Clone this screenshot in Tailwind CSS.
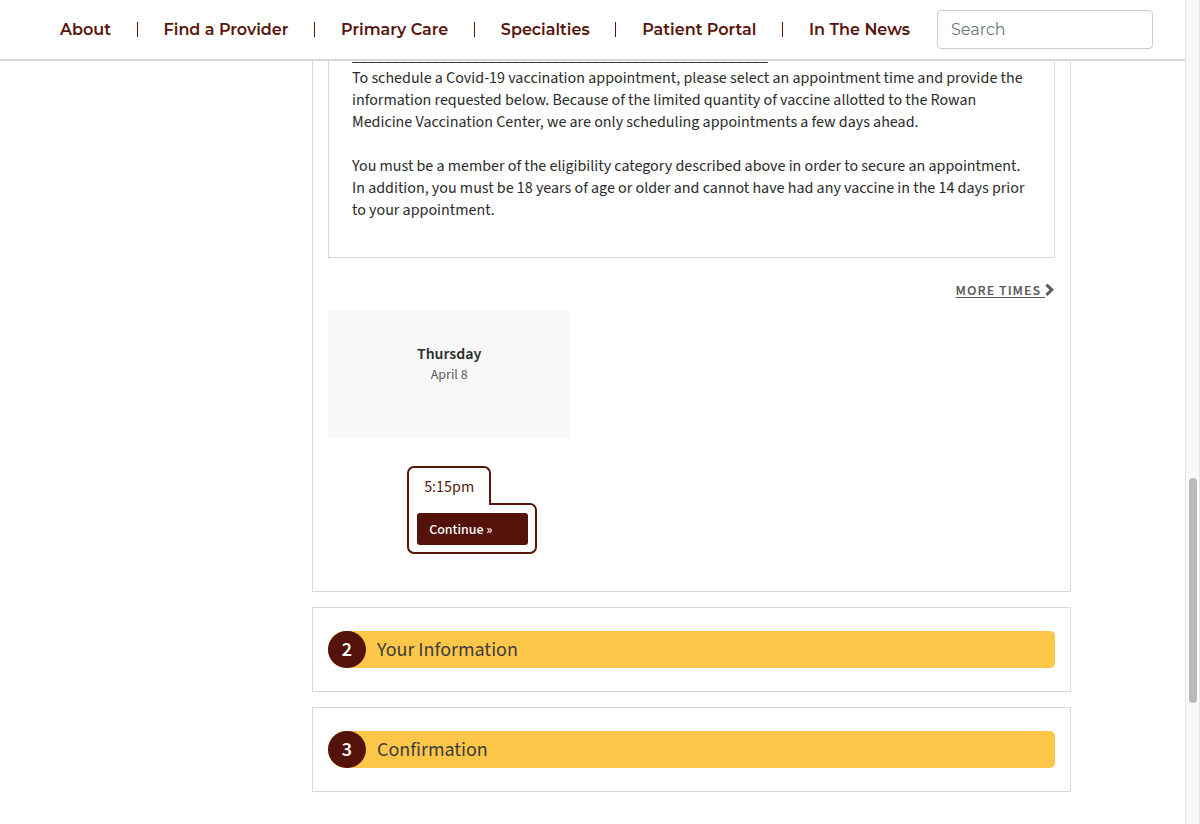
<!DOCTYPE html>
<html lang="en">
<head>
<meta charset="utf-8">
<meta name="viewport" content="width=device-width, initial-scale=1">
<title>Schedule a Vaccination Appointment</title>
<script src="https://cdn.jsdelivr.net/npm/@tailwindcss/browser@4"></script>
</head>
<body class="bg-white font-['Source_Sans_Pro','Source_Sans_3','Noto_Sans_CJK_SC',sans-serif] text-[#2b2b2b]">
<div class="flex h-screen overflow-hidden">
  <div class="min-w-0 grow">
    <header class="relative z-10 flex items-center border-b-2 border-[#d8d8d8] bg-white pt-[10px] pr-8 pb-[10px] pl-[60px] font-['Montserrat','Inter',sans-serif]">
      <nav aria-label="Main" class="flex grow items-center justify-between text-[16px] leading-6 font-semibold whitespace-nowrap text-[#57150b]">
        <a href="#">About</a>
        <span class="h-[15px] w-px bg-[#57150b]"></span>
        <a href="#">Find a Provider</a>
        <span class="h-[15px] w-px bg-[#57150b]"></span>
        <a href="#">Primary Care</a>
        <span class="h-[15px] w-px bg-[#57150b]"></span>
        <a href="#">Specialties</a>
        <span class="h-[15px] w-px bg-[#57150b]"></span>
        <a href="#">Patient Portal</a>
        <span class="h-[15px] w-px bg-[#57150b]"></span>
        <a href="#">In The News</a>
      </nav>
      <input type="search" aria-label="Search" placeholder="Search" class="ml-[27px] h-[39px] w-[216px] rounded-[4px] border border-[#c5cdd5] bg-white px-[13px] text-[16px] text-[#495057] placeholder:text-[#6c757d]">
    </header>

    <main class="-mt-4 mr-[114px] ml-[312px] flex flex-col gap-[15px]">
      <section class="border border-t-0 border-[#d8d8d8] px-[15px] pb-[37px]">
        <div class="border border-t-0 border-[#d8d8d8] px-[23px] pb-9 text-[16px] leading-[22px]">
          <p aria-hidden="true" class="whitespace-nowrap">____________________________________________________</p>
          <p>To schedule a Covid-19 vaccination appointment, please select an appointment time and provide the information requested below. Because of the limited quantity of vaccine allotted to the Rowan<br>Medicine Vaccination Center, we are only scheduling appointments a few days ahead.</p>
          <p class="mt-[22px]">You must be a member of the eligibility category described above in order to secure an appointment.<br>In addition, you must be 18 years of age or older and cannot have had any vaccine in the 14 days prior to your appointment.</p>
        </div>
        <div class="flex justify-end pt-[23px] pb-[9px]">
          <a href="#" class="flex items-center text-[14px] leading-5 font-semibold tracking-[1px] text-[#5c5c5c]">
            <span class="whitespace-pre underline underline-offset-2">MORE TIMES </span>
            <svg class="h-[14px] w-[10px]" viewBox="0 0 10 14" fill="none" stroke="currentColor" stroke-width="3" aria-hidden="true"><path d="M1.4 0.6 6.8 5.8 1.4 11"/></svg>
          </a>
        </div>
        <div class="grid grid-cols-3">
          <div>
            <div class="h-32 bg-[#f8f8f8] pt-[33px] text-center">
              <h3 class="text-[16px] leading-[22px] font-semibold">Thursday</h3>
              <p class="text-[14px] leading-5 text-[#5c5c5c]">April 8</p>
            </div>
            <div class="mx-auto mt-7 w-[84px]">
              <div class="relative z-10 -mb-[2px] rounded-t-[7px] border-2 border-b-0 border-[#57150b] bg-white text-center">
                <label for="slot" class="block h-[37px] text-[16px] leading-[38px] text-[#57150b]">5:15pm</label>
              </div>
              <div class="w-[130px] rounded-[7px] rounded-tl-none border-2 border-[#57150b] pt-2 pr-[7px] pb-[7px] pl-2">
                <button id="slot" type="button" class="block h-8 w-full rounded-[3px] bg-[#54130a] px-3 pt-[2px] text-left text-[14px] font-medium text-white">Continue »</button>
              </div>
            </div>
          </div>
        </div>
      </section>

      <section class="border border-[#d8d8d8] px-[15px] py-[23px]">
        <h2 class="flex h-[37px] items-center rounded-l-[18px] rounded-r-[5px] bg-[#ffc74a] text-[20px] text-[#3c3c3c]">
          <span class="mr-[11px] flex h-full w-[38px] items-center justify-center rounded-full bg-[#54130a] font-semibold text-white">2</span>Your Information
        </h2>
      </section>

      <section class="border border-[#d8d8d8] px-[15px] py-[23px]">
        <h2 class="flex h-[37px] items-center rounded-l-[18px] rounded-r-[5px] bg-[#ffc74a] text-[20px] text-[#3c3c3c]">
          <span class="mr-[11px] flex h-full w-[38px] items-center justify-center rounded-full bg-[#54130a] font-semibold text-white">3</span>Confirmation
        </h2>
      </section>
    </main>
  </div>

  <div aria-hidden="true" class="w-[15px] shrink-0 border-x border-[#e7e7e7] bg-[#f9f9f9] pt-[478px] pl-[3px]">
    <div class="h-[225px] w-2 rounded-full bg-[#b9b9b9]"></div>
  </div>
</div>
</body>
</html>
